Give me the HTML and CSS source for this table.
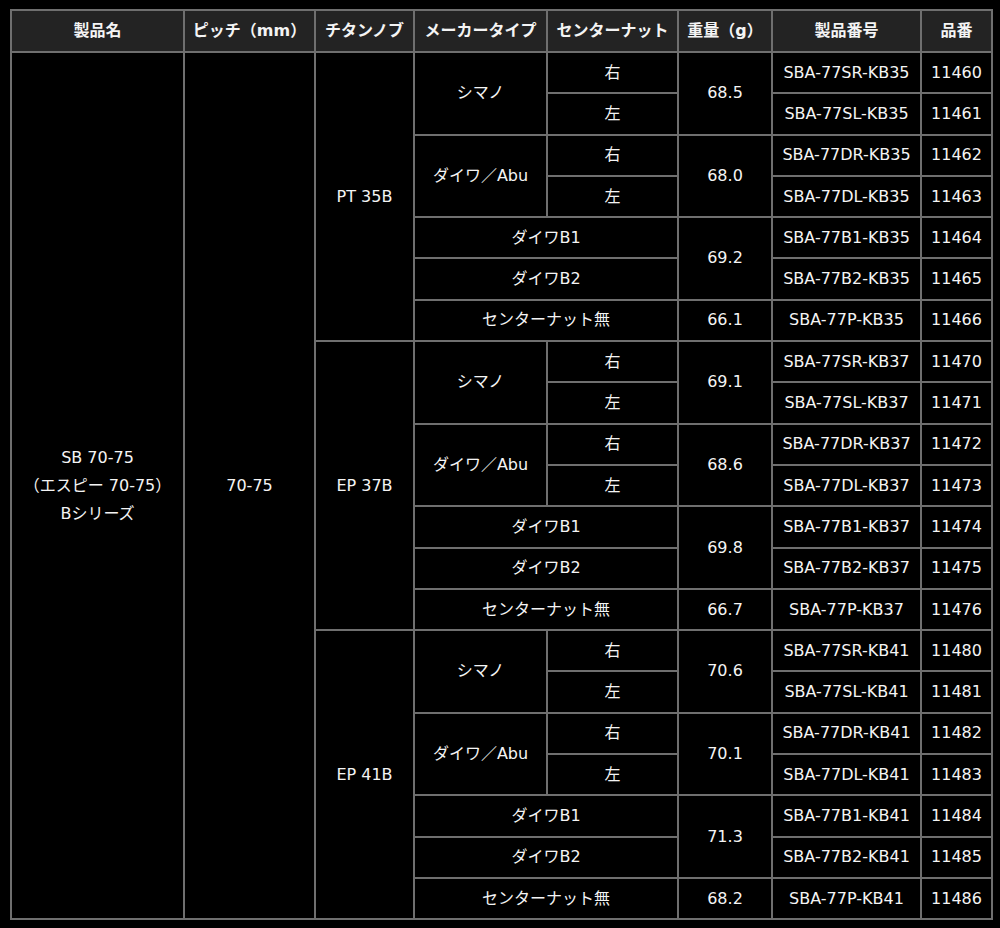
FILE: index.html
```html
<!DOCTYPE html>
<html lang="ja">
<head>
<meta charset="utf-8">
<title>SB 70-75 Bシリーズ</title>
<link rel="stylesheet" href="styles.css">
</head>
<body>
<table class="spec">
<colgroup>
<col class="c1"><col class="c2"><col class="c3"><col class="c4"><col class="c5"><col class="c6"><col class="c7"><col class="c8">
</colgroup>
<thead>
<tr><th>製品名</th><th>ピッチ（mm）</th><th>チタンノブ</th><th>メーカータイプ</th><th>センターナット</th><th>重量（g）</th><th>製品番号</th><th>品番</th></tr>
</thead>
<tbody>
<tr><td rowspan="21" class="name">SB 70-75<br>（エスピー 70-75）<br>Bシリーズ</td><td rowspan="21">70-75</td><td rowspan="7">PT 35B</td><td rowspan="2">シマノ</td><td>右</td><td rowspan="2">68.5</td><td>SBA-77SR-KB35</td><td>11460</td></tr>
<tr><td>左</td><td>SBA-77SL-KB35</td><td>11461</td></tr>
<tr><td rowspan="2">ダイワ／Abu</td><td>右</td><td rowspan="2">68.0</td><td>SBA-77DR-KB35</td><td>11462</td></tr>
<tr><td>左</td><td>SBA-77DL-KB35</td><td>11463</td></tr>
<tr><td colspan="2">ダイワB1</td><td rowspan="2">69.2</td><td>SBA-77B1-KB35</td><td>11464</td></tr>
<tr><td colspan="2">ダイワB2</td><td>SBA-77B2-KB35</td><td>11465</td></tr>
<tr><td colspan="2">センターナット無</td><td>66.1</td><td>SBA-77P-KB35</td><td>11466</td></tr>

<tr><td rowspan="7">EP 37B</td><td rowspan="2">シマノ</td><td>右</td><td rowspan="2">69.1</td><td>SBA-77SR-KB37</td><td>11470</td></tr>
<tr><td>左</td><td>SBA-77SL-KB37</td><td>11471</td></tr>
<tr><td rowspan="2">ダイワ／Abu</td><td>右</td><td rowspan="2">68.6</td><td>SBA-77DR-KB37</td><td>11472</td></tr>
<tr><td>左</td><td>SBA-77DL-KB37</td><td>11473</td></tr>
<tr><td colspan="2">ダイワB1</td><td rowspan="2">69.8</td><td>SBA-77B1-KB37</td><td>11474</td></tr>
<tr><td colspan="2">ダイワB2</td><td>SBA-77B2-KB37</td><td>11475</td></tr>
<tr><td colspan="2">センターナット無</td><td>66.7</td><td>SBA-77P-KB37</td><td>11476</td></tr>

<tr><td rowspan="7">EP 41B</td><td rowspan="2">シマノ</td><td>右</td><td rowspan="2">70.6</td><td>SBA-77SR-KB41</td><td>11480</td></tr>
<tr><td>左</td><td>SBA-77SL-KB41</td><td>11481</td></tr>
<tr><td rowspan="2">ダイワ／Abu</td><td>右</td><td rowspan="2">70.1</td><td>SBA-77DR-KB41</td><td>11482</td></tr>
<tr><td>左</td><td>SBA-77DL-KB41</td><td>11483</td></tr>
<tr><td colspan="2">ダイワB1</td><td rowspan="2">71.3</td><td>SBA-77B1-KB41</td><td>11484</td></tr>
<tr><td colspan="2">ダイワB2</td><td>SBA-77B2-KB41</td><td>11485</td></tr>
<tr><td colspan="2">センターナット無</td><td>68.2</td><td>SBA-77P-KB41</td><td>11486</td></tr>
</tbody>
</table>
</body>
</html>
```

FILE: styles.css
```css
html, body {
  background: #000;
}
body {
  margin: 9px 0 0 10px;
  color: #f4f4f4;
  font-family: "DejaVu Sans", "Noto Sans CJK JP", sans-serif;
  font-size: 16px;
}
.spec {
  border-collapse: collapse;
  table-layout: fixed;
  width: 981px;
}
.c1 { width: 173px; }
.c2 { width: 131px; }
.c3 { width: 99px; }
.c4 { width: 133px; }
.c5 { width: 131px; }
.c6 { width: 94px; }
.c7 { width: 149px; }
.c8 { width: 71px; }
.spec th, .spec td {
  border: 2px solid #6f6f6f;
  text-align: center;
  vertical-align: middle;
  padding: 0;
  white-space: nowrap;
  line-height: 20px;
}
.spec th {
  background: #232323;
  height: 40px;
  font-weight: bold;
}
.spec td {
  background: #000;
  height: 39.3px;
}
.spec td.name {
  line-height: 28px;
}
```
